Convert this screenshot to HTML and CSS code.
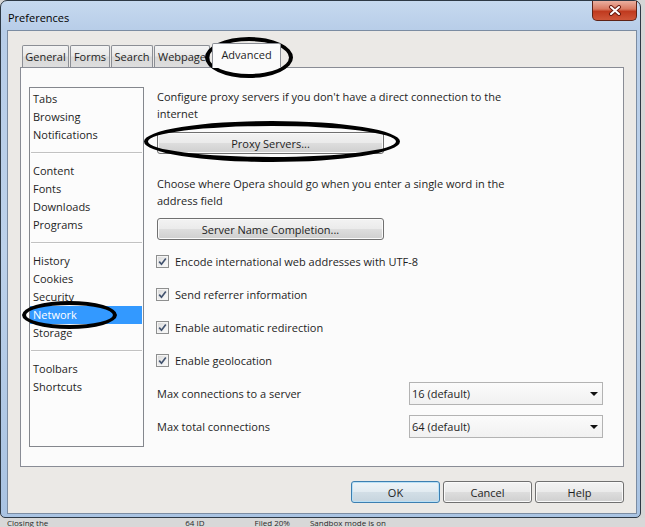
FILE: index.html
```html
<!DOCTYPE html>
<html>
<head>
<meta charset="utf-8">
<title>Preferences</title>
<link rel="stylesheet" href="styles.css">
</head>
<body>
<div class="desk">
  <div class="window">
    <div class="titlebar">
      <span class="title">Preferences</span>
      <div class="close">
        <svg width="14" height="11" viewBox="0 0 14 11"><path d="M3 2 L11 9 M11 2 L3 9" stroke="#6a1a0e" stroke-width="4" stroke-linecap="round"/><path d="M3 2 L11 9 M11 2 L3 9" stroke="#ffffff" stroke-width="2" stroke-linecap="round"/></svg>
      </div>
    </div>
    <div class="client">
      <div class="tabs">
        <div class="tab t-general">General</div>
        <div class="tab t-forms">Forms</div>
        <div class="tab t-search">Search</div>
        <div class="tab t-webpage">Webpage</div>
        <div class="tab active t-advanced">Advanced</div>
      </div>
      <div class="panel">
        <ul class="cats">
          <li>Tabs</li>
          <li>Browsing</li>
          <li>Notifications</li>
          <li class="sep"></li>
          <li>Content</li>
          <li>Fonts</li>
          <li>Downloads</li>
          <li>Programs</li>
          <li class="sep"></li>
          <li>History</li>
          <li>Cookies</li>
          <li>Security</li>
          <li class="sel">Network</li>
          <li>Storage</li>
          <li class="sep"></li>
          <li>Toolbars</li>
          <li>Shortcuts</li>
        </ul>
        <div class="pane">
          <p class="note">Configure proxy servers if you don't have a direct connection to the<br>internet</p>
          <button class="btn wide b-proxy">Proxy Servers...</button>
          <p class="note n-choose">Choose where Opera should go when you enter a single word in the<br>address field</p>
          <button class="btn wide b-server">Server Name Completion...</button>
          <div class="checks">
            <div class="check"><span class="box"><svg width="9" height="9" viewBox="0 0 9 9"><path d="M1.2 4.6 L3.5 7.2 L7.8 1.6" fill="none" stroke="#42536f" stroke-width="1.7"/></svg></span>Encode international web addresses with UTF-8</div>
            <div class="check"><span class="box"><svg width="9" height="9" viewBox="0 0 9 9"><path d="M1.2 4.6 L3.5 7.2 L7.8 1.6" fill="none" stroke="#42536f" stroke-width="1.7"/></svg></span>Send referrer information</div>
            <div class="check"><span class="box"><svg width="9" height="9" viewBox="0 0 9 9"><path d="M1.2 4.6 L3.5 7.2 L7.8 1.6" fill="none" stroke="#42536f" stroke-width="1.7"/></svg></span>Enable automatic redirection</div>
            <div class="check"><span class="box"><svg width="9" height="9" viewBox="0 0 9 9"><path d="M1.2 4.6 L3.5 7.2 L7.8 1.6" fill="none" stroke="#42536f" stroke-width="1.7"/></svg></span>Enable geolocation</div>
          </div>
          <div class="limits">
            <span>Max connections to a server</span>
            <div class="select"><span>16 (default)</span><i class="arrow"></i></div>
            <span>Max total connections</span>
            <div class="select"><span>64 (default)</span><i class="arrow"></i></div>
          </div>
        </div>
      </div>
      <div class="actions">
        <button class="btn act focus">OK</button>
        <button class="btn act">Cancel</button>
        <button class="btn act">Help</button>
      </div>
    </div>
  </div>
  <div class="under">
    <span class="u1">Closing the</span>
    <span class="u2">64 ID</span>
    <span class="u3">Filed 20%</span>
    <span class="u4">Sandbox mode is on</span>
  </div>
  <span class="ring ring-tab"></span>
  <span class="ring ring-proxy"></span>
  <span class="ring ring-net"></span>
</div>
</body>
</html>
```

FILE: styles.css
```css
* { box-sizing: border-box; }
html, body { margin: 0; padding: 0; }
body {
  font-family: "Open Sans", "Noto Sans", sans-serif;
  font-size: 11px;
  color: #1e1e1e;
  background: #d9d9d9;
}
.desk {
  position: relative;
  width: 645px;
  height: 527px;
  overflow: hidden;
  background: #d6d6d6;
}
.window {
  width: 641px;
  height: 518px;
  border: 1px solid #2e3945;
  border-radius: 7px 7px 5px 5px;
  background: linear-gradient(to bottom, #c6d9ef 0, #b7cde8 30px, #bcd1ea 250px, #a9c3e2 100%);
  padding: 0 3px 3px 6px;
  display: flex;
  flex-direction: column;
}
.titlebar {
  height: 29px;
  display: flex;
  align-items: flex-start;
  justify-content: space-between;
}
.title {
  padding: 9px 0 0 1px;
  line-height: 15px;
  color: #000;
}
.close {
  width: 45px;
  height: 20px;
  border: 1px solid #5e2216;
  border-top: none;
  border-radius: 0 0 5px 5px;
  background: linear-gradient(to bottom, #eab0a0 0, #d97a62 42%, #c03a1f 55%, #cf5639 100%);
  display: flex;
  align-items: center;
  justify-content: center;
}
.client {
  flex: 1;
  border: 1px solid #7b8ca2;
  background: #ebe9e6;
  padding: 12px 12px 10px 12px;
  display: flex;
  flex-direction: column;
}
.tabs {
  display: flex;
  align-items: flex-end;
  height: 24px;
  padding-left: 2px;
  gap: 1px;
}
.tab {
  height: 22px;
  border: 1px solid #8b8e95;
  border-bottom: none;
  border-radius: 2px 2px 0 0;
  background: linear-gradient(to bottom, #f4f4f4 0, #e8e8e8 48%, #d8d8d8 52%, #dedede 100%);
  display: flex;
  align-items: center;
  justify-content: center;
  padding-bottom: 1px;
}
.t-general { width: 47px; }
.t-forms { width: 40px; }
.t-search { width: 42px; }
.t-webpage { width: 56px; }
.t-advanced { width: 69px; }
.tab.active {
  height: 25px;
  margin-bottom: -1px;
  margin-left: 1px;
  background: #fbfbfb;
  position: relative;
  z-index: 1;
  padding-bottom: 3px;
}
.panel {
  height: 400px;
  border: 1px solid #898c95;
  background: #fbfbfb;
  padding: 19px 0 0 8px;
  display: flex;
  gap: 13px;
  align-items: flex-start;
}
.cats {
  width: 115px;
  height: 360px;
  border: 1px solid #84878d;
  background: #fcfcfc;
  margin: 0;
  padding: 2px 0 0 0;
  list-style: none;
}
.cats li {
  height: 18px;
  line-height: 18px;
  padding-left: 3px;
  white-space: nowrap;
}
.cats li.sep {
  display: flex;
  align-items: center;
  padding: 0 1px;
}
.cats li.sep::before {
  content: "";
  flex: 1;
  border-top: 1px solid #c2c2c2;
  border-bottom: 1px solid #ffffff;
}
.cats li.sel {
  background: #3399ff;
  color: #ffffff;
  margin-right: 1px;
}
.pane {
  flex: 1;
  padding-top: 1px;
}
.note {
  margin: 0;
  line-height: 17px;
  white-space: nowrap;
}
.n-choose { margin-top: 21px; }
.btn {
  font-family: inherit;
  font-size: 11px;
  color: #1e1e1e;
  height: 22px;
  border: 1px solid #707070;
  border-radius: 3px;
  background: linear-gradient(to bottom, #f3f3f3 0, #ebebeb 48%, #dddddd 52%, #cfcfcf 100%);
  box-shadow: inset 0 0 0 1px #fafafa;
  padding: 0;
  display: block;
  cursor: default;
}
.wide { width: 227px; }
.b-proxy { margin-top: 10px; }
.b-server { margin-top: 9px; }
.checks { margin-top: 5px; }
.check {
  height: 33px;
  display: flex;
  align-items: center;
  gap: 6px;
  margin-left: -1px;
  white-space: nowrap;
}
.box {
  width: 13px;
  height: 13px;
  border: 1px solid #8e8f8f;
  background: linear-gradient(135deg, #d6d6d6 0, #f0f0f0 60%, #fbfbfb 100%);
  box-shadow: inset 0 0 0 1px #f4f4f4;
  display: flex;
  align-items: center;
  justify-content: center;
}
.limits {
  margin-top: 5px;
  display: grid;
  grid-template-columns: 252px 194px;
  row-gap: 10px;
  align-items: center;
}
.select {
  height: 23px;
  border: 1px solid #b3b3b3;
  background: linear-gradient(to bottom, #fbfbfb, #f1f1f1);
  display: flex;
  align-items: center;
  justify-content: space-between;
  padding: 0 2px 0 2px;
}
.arrow {
  width: 0;
  height: 0;
  border-left: 4px solid transparent;
  border-right: 4px solid transparent;
  border-top: 4px solid #111111;
  margin-right: 2px;
}
.actions {
  margin-top: 14px;
  display: flex;
  justify-content: flex-end;
  gap: 3px;
}
.act { width: 89px; }
.focus {
  border-color: #3c7fb1;
  background: linear-gradient(to bottom, #eef4f8 0, #e2ebf1 48%, #d2dee6 52%, #c6d4de 100%);
  box-shadow: inset 0 0 0 1px #b9e0f6;
}
.under {
  height: 9px;
  overflow: hidden;
  display: flex;
  align-items: center;
  font-size: 8px;
  line-height: 9px;
  color: #2a2a2a;
  background: #d8d8d8;
  padding-left: 7px;
}
.u2 { margin-left: 137px; }
.u3 { margin-left: 50px; }
.u4 { margin-left: 20px; }
.ring {
  position: absolute;
  border: 4px solid #000000;
  border-radius: 50%;
  pointer-events: none;
}
.ring-tab { left: 205px; top: 37px; width: 88px; height: 41px; }
.ring-proxy { left: 144px; top: 121px; width: 256px; height: 41px; border-width: 5px 4px; }
.ring-net { left: 22px; top: 301px; width: 95px; height: 28px; }
```
